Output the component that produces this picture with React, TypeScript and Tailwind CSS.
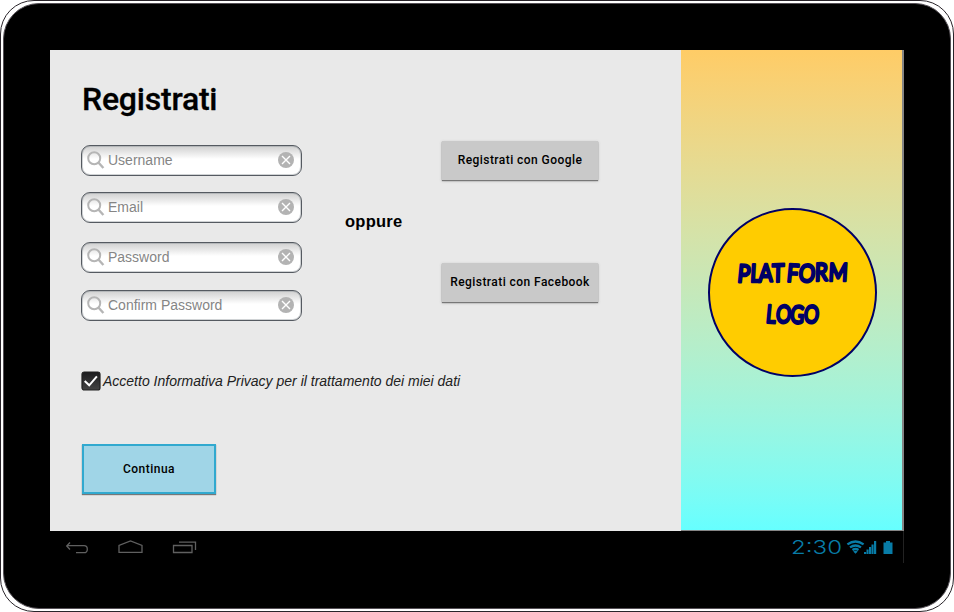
import React from "react";

const fields = [
  { label: "Username", gap: "mt-[24px]" },
  { label: "Email", gap: "mt-[16px]" },
  { label: "Password", gap: "mt-[19px]" },
  { label: "Confirm Password", gap: "mt-[17px]" },
];

function SearchField({ label, gap }: { label: string; gap: string }) {
  return (
    <div
      className={`${gap} flex h-[31px] w-[221px] items-center rounded-[9px] border border-[#555a61] bg-linear-to-b from-[#d0d0d0] via-white via-45% to-white pl-[5px] pr-[7px] shadow-[inset_0_0_0_1px_#8a909766]`}
    >
      <svg className="-mt-px" width="18" height="20" viewBox="0 0 18 20" fill="none" stroke="#b5b5b5">
        <circle cx="7.2" cy="8.2" r="6" strokeWidth="2" />
        <path d="M11.2 12.3 16.4 18" strokeWidth="2.4" />
      </svg>
      <span className="-mt-[2px] ml-[3px] flex-1 whitespace-nowrap text-[14px] leading-[18px] text-[#858585]">{label}</span>
      <svg className="-mt-px" width="16" height="16" viewBox="0 0 16 16">
        <circle cx="8" cy="8" r="8" fill="#b3b3b3" />
        <path d="m4 4 8 8m0-8-8 8" stroke="#fff" strokeWidth="1.4" />
      </svg>
    </div>
  );
}

function ProviderButton({ children, gap }: { children: React.ReactNode; gap: string }) {
  return (
    <button
      className={`${gap} flex h-[39px] w-[156px] items-center justify-center whitespace-nowrap bg-[#c9c9c9] pb-[2px] font-['Roboto',sans-serif] text-[12px] font-medium tracking-[0.44px] text-black shadow-[0_1px_1px_#777,0_1px_3px_#bbb]`}
    >
      {children}
    </button>
  );
}

function Logo() {
  return (
    <svg width="169" height="169" viewBox="0 0 169 169">
      <circle cx="84.5" cy="84.5" r="83.5" fill="#fc0" stroke="#000066" strokeWidth="2" />
      <g
        fill="#000066"
        stroke="#000066"
        strokeWidth="2.7"
        strokeLinejoin="round"
        strokeLinecap="round"
        fontFamily="Lato, sans-serif"
        fontWeight="400"
        fontSize="24.5"
      >
        <text transform="translate(29 74) skewX(-3) scale(.84 1)" x="0 15.5 25.5 41.5 58.5 72.5 92.5 108.5" y="0 -.5 0 0 -.5 -.5 -1 -1.5" rotate="3 0 -2 -2 3 3 -2 0">PLATFORM</text>
        <text transform="translate(57.5 115) skewX(-3) scale(.77 1)" x="0 13 31.5 49" y="-.5 -.5 0 -.5" rotate="3 2 2 3">LOGO</text>
      </g>
    </svg>
  );
}

function SystemBar() {
  return (
    <div className="flex h-[32px] w-[854px] items-start border-r border-[#222] bg-black">
      <svg width="150" height="32" viewBox="0 0 150 32" fill="none" stroke="#606060" strokeWidth="1.3">
        <path d="M20 11.5 16.7 15 20 18.5M17 14.7h17q3.3 0 3.3 3.5t-3.3 3.5H26" />
        <path d="M69 21.4v-7L80.5 10 92 14.4v7Z" />
        <path d="M123.5 14.5h18.5v7h-18.5ZM129 11.1h16.5v8" />
      </svg>
      <div className="flex-1" />
      <svg width="111" height="32" viewBox="0 0 111 32">
        <text x="-1" y="22.9" fill="#087ca7" fontFamily="Inter, sans-serif" fontWeight="300" fontSize="19" textLength="51" lengthAdjust="spacingAndGlyphs">2:30</text>
        <g fill="none" stroke="#087ca7" strokeWidth="2.3">
          <path d="M55.4 13.4q8.1-5.8 16.2 0M58 16.4q5.5-3.8 11 0M60.5 19q3-2 6 0" />
        </g>
        <path d="m61.2 20.4 2.3 2.4 2.3-2.4q-2.3-1.2-4.6 0Z" fill="#087ca7" />
        <path d="M72 23v-2h2.1v2Zm2.5 0v-4.5h2.1v4.5Zm2.5 0v-7h2.1v7Zm2.5 0V13.5h2.1v9.5Zm2.5 0V10h2.2v13Z" fill="#087ca7" />
        <path d="M91.5 11.5H94V10h4v1.5h2.5V23h-9Z" fill="#087ca7" />
      </svg>
    </div>
  );
}

export default function App() {
  return (
    <div className="h-[612px] w-[954px] overflow-hidden bg-white font-['Liberation_Sans',Arial,sans-serif]">
      <div className="h-full w-full rounded-[34px] border border-[#29242a] bg-white p-[2px]">
        <div className="h-full w-full rounded-[36px] border border-[#555056] bg-black px-[46px] pt-[46px]">
          <div className="flex h-[481px] w-[854px]">
            <main className="w-[631px] shrink-0 bg-[#e9e9e9] pl-[31px] pt-[28px]">
              <h1 className="ml-px h-[43px] font-['Roboto',sans-serif] text-[32px] font-medium leading-[43px] tracking-[-0.22px] text-black [-webkit-text-stroke:0.3px_black]">Registrati</h1>
              <div className="flex h-[226px]">
                <div className="w-[221px] shrink-0">
                  {fields.map((field) => (
                    <SearchField key={field.label} {...field} />
                  ))}
                </div>
                <div className="w-[140px] shrink-0 pl-[43px] pt-[90px] text-[16.5px] font-bold leading-[20px] tracking-[0.25px] text-black">oppure</div>
                <div>
                  <ProviderButton gap="mt-[20px]">Registrati con Google</ProviderButton>
                  <ProviderButton gap="mt-[83px]">Registrati con Facebook</ProviderButton>
                </div>
              </div>
              <div className="mt-[24px] flex h-[20px] items-center">
                <svg width="20" height="20" viewBox="0 0 20 20">
                  <defs>
                    <linearGradient id="check-fill" x2="0" y2="1">
                      <stop stopColor="#1c1c1e" />
                      <stop offset="1" stopColor="#444" />
                    </linearGradient>
                  </defs>
                  <rect x="1" y="1" width="18" height="18" rx="2.3" fill="url(#check-fill)" stroke="#222" strokeWidth="1.2" />
                  <path d="m3.7 10 4.5 4.3 7.7-9" fill="none" stroke="#fff" strokeWidth="2" />
                </svg>
                <span className="ml-[2px] whitespace-nowrap text-[14px] italic leading-[18px] text-[#222]">Accetto Informativa Privacy per il trattamento dei miei dati</span>
              </div>
              <button className="ml-px mt-[53px] flex h-[50px] w-[134px] items-center justify-center border-2 border-[#31a9cf] bg-[#a0d5e7] font-['Roboto',sans-serif] text-[12px] font-medium tracking-[0.5px] text-black shadow-[0_1px_1px_#777]">Continua</button>
            </main>
            <aside className="flex w-[223px] justify-center border-b border-r-2 border-[#858585] bg-linear-to-b from-[#ffcc66] to-[#66ffff] pl-[2px] pt-[158px]">
              <Logo />
            </aside>
          </div>
          <SystemBar />
        </div>
      </div>
    </div>
  );
}
